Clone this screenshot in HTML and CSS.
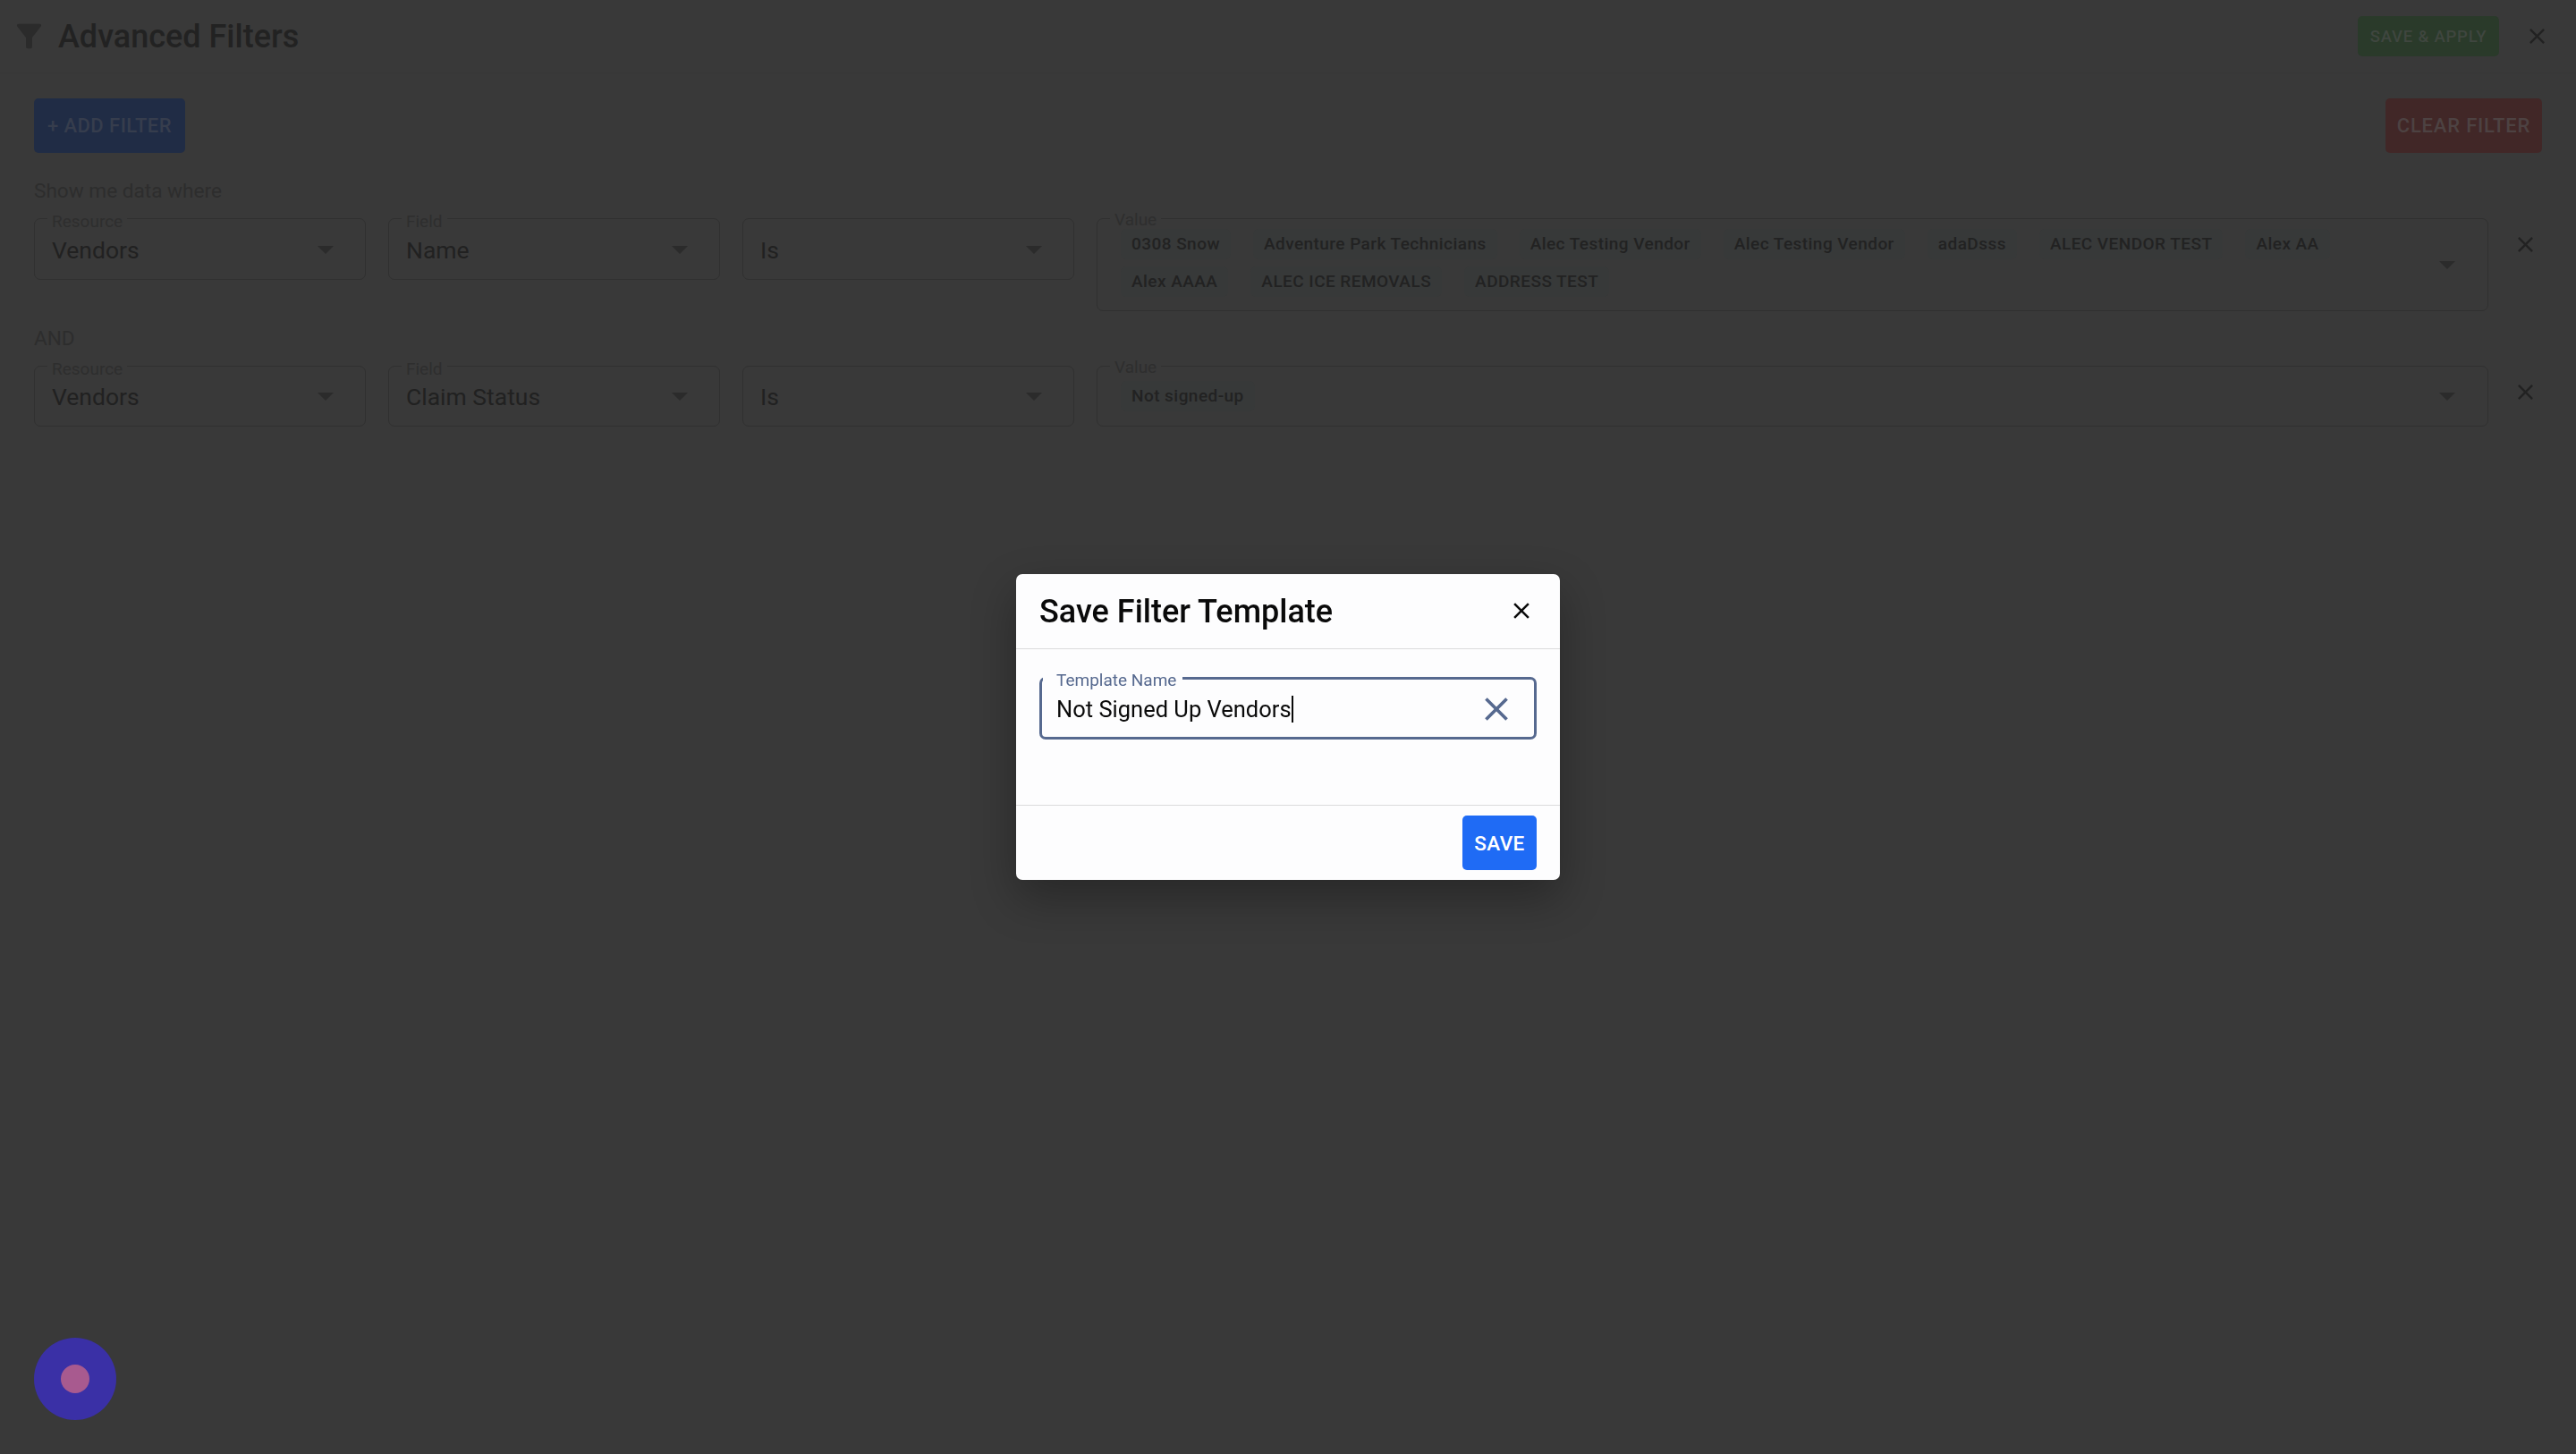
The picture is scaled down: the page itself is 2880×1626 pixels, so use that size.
FILE: index.html
```html
<!DOCTYPE html>
<html lang="en">
<head>
<meta charset="utf-8">
<title>Advanced Filters</title>
<link rel="stylesheet" href="styles.css">
</head>
<body>
<div class="page">
  <header class="top">
    <svg class="funnel" viewBox="0 0 24 24"><path d="M4.25 5.61C6.27 8.2 10 13 10 13v6c0 .55.45 1 1 1h2c.55 0 1-.45 1-1v-6s3.72-4.8 5.74-7.39c.51-.66.04-1.61-.79-1.61H5.04c-.83 0-1.3.95-.79 1.61z"/></svg>
    <h1 class="top-title">Advanced Filters</h1>
    <button class="btn btn-apply">SAVE &amp; APPLY</button>
    <svg class="x x-top" viewBox="0 0 24 24"><path d="M19 6.41 17.59 5 12 10.59 6.41 5 5 6.41 10.59 12 5 17.59 6.41 19 12 13.41 17.59 19 19 17.59 13.41 12z"/></svg>
  </header>
  <div class="toolbar">
    <button class="btn btn-add">+ ADD FILTER</button>
    <button class="btn btn-clear">CLEAR FILTER</button>
  </div>
  <p class="caption caption-where">Show me data where</p>
  <div class="row">
    <div class="field"><span class="label">Resource</span><span class="val">Vendors</span><i class="arrow"></i></div>
    <div class="field"><span class="label">Field</span><span class="val">Name</span><i class="arrow"></i></div>
    <div class="field"><span class="val">Is</span><i class="arrow"></i></div>
    <div class="field field-value">
      <span class="label">Value</span>
      <div class="chips">
        <span class="chip">0308 Snow</span>
        <span class="chip">Adventure Park Technicians</span>
        <span class="chip">Alec Testing Vendor</span>
        <span class="chip">Alec Testing Vendor</span>
        <span class="chip">adaDsss</span>
        <span class="chip">ALEC VENDOR TEST</span>
        <span class="chip">Alex AA</span>
        <span class="chip">Alex AAAA</span>
        <span class="chip">ALEC ICE REMOVALS</span>
        <span class="chip">ADDRESS TEST</span>
      </div>
      <i class="arrow"></i>
    </div>
    <svg class="x x-row" viewBox="0 0 24 24"><path d="M19 6.41 17.59 5 12 10.59 6.41 5 5 6.41 10.59 12 5 17.59 6.41 19 12 13.41 17.59 19 19 17.59 13.41 12z"/></svg>
  </div>
  <p class="caption caption-and">AND</p>
  <div class="row row-second">
    <div class="field"><span class="label">Resource</span><span class="val">Vendors</span><i class="arrow"></i></div>
    <div class="field"><span class="label">Field</span><span class="val">Claim Status</span><i class="arrow"></i></div>
    <div class="field"><span class="val">Is</span><i class="arrow"></i></div>
    <div class="field field-value">
      <span class="label">Value</span>
      <div class="chips chips-single"><span class="chip">Not signed-up</span></div>
      <i class="arrow"></i>
    </div>
    <svg class="x x-row" viewBox="0 0 24 24"><path d="M19 6.41 17.59 5 12 10.59 6.41 5 5 6.41 10.59 12 5 17.59 6.41 19 12 13.41 17.59 19 19 17.59 13.41 12z"/></svg>
  </div>
  <div class="fab"><span class="fab-dot"></span></div>
</div>
<div class="dialog-wrap">
  <section class="dialog">
    <div class="dialog-head">
      <h2 class="dialog-title">Save Filter Template</h2>
      <svg class="x x-dialog" viewBox="0 0 24 24"><path d="M19 6.41 17.59 5 12 10.59 6.41 5 5 6.41 10.59 12 5 17.59 6.41 19 12 13.41 17.59 19 19 17.59 13.41 12z"/></svg>
    </div>
    <div class="dialog-body">
      <div class="input">
        <span class="input-label">Template Name</span>
        <span class="input-text">Not Signed Up Vendors</span><span class="caret"></span>
        <svg class="x x-clear" viewBox="0 0 24 24"><path d="M19 6.41 17.59 5 12 10.59 6.41 5 5 6.41 10.59 12 5 17.59 6.41 19 12 13.41 17.59 19 19 17.59 13.41 12z"/></svg>
      </div>
    </div>
    <div class="dialog-foot"><button class="btn btn-save">SAVE</button></div>
  </section>
</div>
</body>
</html>
```
FILE: styles.css
```css
* { box-sizing: border-box; }
html, body { margin: 0; height: 100%; }
body { background: #393939; font-family: Roboto, "Liberation Sans", sans-serif; overflow: hidden; }
.page { position: relative; height: 1626px; }

.top { display: flex; align-items: center; height: 82px; padding: 0 29px 0 12px; border-bottom: 1px solid #373737; }
.funnel { width: 41px; height: 41px; fill: #2b2b2b; }
.top-title { flex: 1; margin: 0 0 0 12px; font-size: 36px; font-weight: 500; color: #222; }
.x { display: block; flex: none; }
.x-top { width: 29px; height: 29px; margin-left: 28px; fill: #222; }

.btn { display: block; border: 0; font-family: inherit; font-weight: 500; border-radius: 5px; padding: 0; white-space: nowrap; }
.btn-apply { width: 158px; height: 45px; background: #2a3a2a; color: #3f463f; font-size: 18.5px; letter-spacing: .8px; }
.btn-add { width: 169px; height: 61px; background: #202c45; color: #363d4d; font-size: 22px; letter-spacing: .45px; }
.btn-clear { width: 175px; height: 61px; background: #412727; color: #4d4242; font-size: 22px; letter-spacing: .8px; }

.toolbar { display: flex; justify-content: space-between; padding: 28px 38px 0; }
.caption { margin: 0; padding-left: 38px; font-size: 22.6px; line-height: 28px; color: #2d2d2d; }
.caption-where { margin-top: 29px; margin-bottom: 16px; }
.caption-and { margin-top: 17px; margin-bottom: 16px; }

.row { display: flex; align-items: flex-start; gap: 25px; padding: 0 42px 0 38px; }
.row-second .field { height: 68px; }
.field { position: relative; flex: none; display: flex; align-items: center; width: 371px; height: 69px; padding: 0 19px; border: 1px solid #303030; border-radius: 7px; }
.field-value { flex: 1; width: auto; height: auto; min-height: 68px; padding: 0; }
.label { position: absolute; left: 14px; top: -7px; padding: 0 5px; background: #393939; font-size: 19px; line-height: 20px; color: #2e2e2e; }
.field-value .label { top: -9px; }
.val { font-size: 26.5px; color: #212121; padding-top: 1px; }
.arrow { position: absolute; right: 35px; top: 50%; margin-top: -4px; width: 0; height: 0; border-left: 9px solid transparent; border-right: 9px solid transparent; border-top: 9px solid #2b2b2b; }
.field-value .arrow { right: 36px; }
.chips { display: flex; flex-wrap: wrap; gap: 8px 25px; padding: 11px 60px 15px 26px; }
.chips-single { padding-top: 16px; padding-bottom: 16px; }
.chip { height: 34px; padding: 0 12px; border-radius: 6px; background: #373939; font-size: 19px; line-height: 34px; font-weight: 500; letter-spacing: .45px; color: #222; }
.x-row { width: 29px; height: 29px; margin: 15px 0 0 2px; fill: #222; }

.fab { position: absolute; left: 38px; top: 1496px; display: flex; align-items: center; justify-content: center; width: 92px; height: 92px; border-radius: 50%; background: #3a30a6; }
.fab-dot { width: 32px; height: 32px; border-radius: 50%; background: #a85a8f; }

.dialog-wrap { position: fixed; inset: 0; display: flex; align-items: center; justify-content: center; }
.dialog { display: flex; flex-direction: column; width: 608px; height: 342px; background: #fdfdfe; border-radius: 7px; box-shadow: 0 20px 50px rgba(0,0,0,.3); }
.dialog-head { display: flex; align-items: center; justify-content: space-between; height: 84px; padding: 0 26px; border-bottom: 1px solid #dcdcdc; }
.dialog-title { margin: 0; font-size: 36px; font-weight: 500; color: #0a0a0a; }
.x-dialog { width: 30px; height: 30px; fill: #0a0a0a; margin: -2px 2px 0 0; }
.dialog-body { flex: 1; padding: 31px 26px 0; border-bottom: 1px solid #dcdcdc; }
.input { position: relative; display: flex; align-items: center; height: 70px; padding: 1px 16px 0; border: 3px solid #56698f; border-radius: 7px; }
.input-label { position: absolute; left: 1px; top: -9px; padding: 0 7px 0 15px; background: #fdfdfe; font-size: 19px; line-height: 20px; color: #56698f; }
.input-text { font-size: 25.5px; color: #0a0a0a; }
.caret { width: 2px; height: 30px; background: #0a0a0a; }
.x-clear { width: 44px; height: 44px; margin-left: auto; margin-right: 4px; fill: #56698f; }
.dialog-foot { display: flex; justify-content: flex-end; align-items: center; height: 83px; padding: 0 26px; }
.btn-save { width: 83px; height: 61px; padding-top: 1px; background: #1f6bf5; color: #fff; font-size: 22.5px; letter-spacing: .4px; }
```
